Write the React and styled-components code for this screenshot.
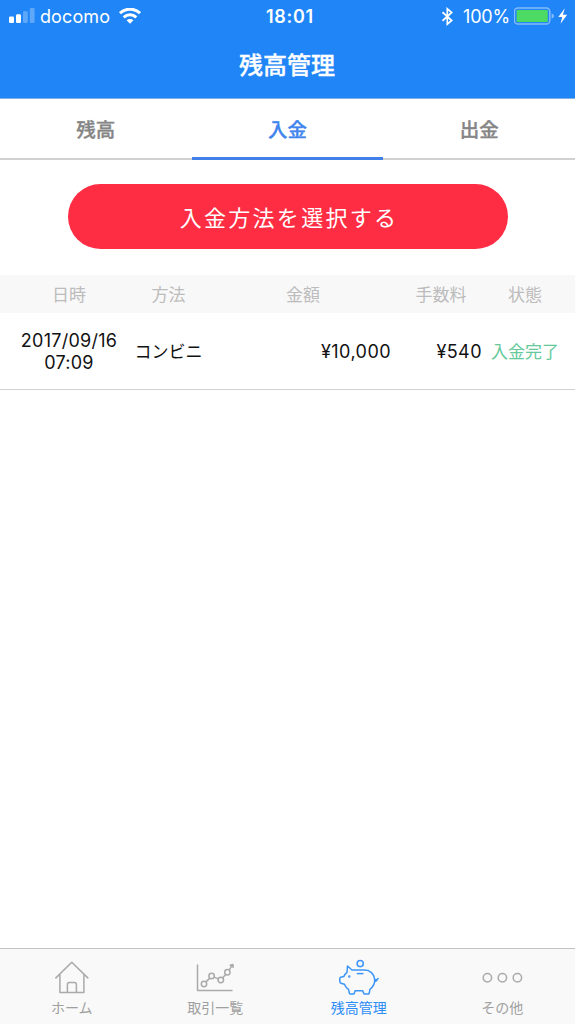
import styled, { createGlobalStyle } from 'styled-components';

const GlobalStyle = createGlobalStyle`
  * {
    box-sizing: border-box;
  }

  body {
    margin: 0;
    background-color: #fff;
    font-family: Inter, 'Noto Sans CJK JP', sans-serif;
  }

  button {
    padding: 0;
    border: 0;
    background: none;
    font-family: inherit;
  }
`;

const Screen = styled.div`
  display: flex;
  flex-direction: column;
  width: 575px;
  height: 1024px;
  overflow: hidden;
`;

const Header = styled.header`
  height: 99px;
  background-color: #2086f7;
  border-bottom: 1px solid #86aee0;
  color: #fff;
`;

const StatusBar = styled.div`
  display: grid;
  grid-template-columns: 1fr auto 1fr;
  align-items: center;
  height: 32px;
  padding: 0 6px 1px 9px;
  font-size: 18px;
  line-height: 31px;

  strong {
    padding: 1px 0 0 2px;
    font-size: 18px;
    font-weight: 600;
    letter-spacing: .7px;
  }
`;

const Carrier = styled.div`
  display: flex;
  align-items: center;

  span {
    margin: 0 9px 0 5px;
    padding-top: 1px;
    letter-spacing: .1px;
  }
`;

const Power = styled.div`
  display: flex;
  justify-content: flex-end;
  align-items: center;

  span {
    margin: 0 4px 0 9px;
    padding-top: 1px;
    letter-spacing: -.2px;
  }
`;

const Title = styled.h1`
  margin: 0;
  padding-right: 1px;
  font-size: 24px;
  font-weight: 500;
  line-height: 68px;
  text-align: center;
  -webkit-text-stroke: .35px currentColor;
`;

const Tabs = styled.nav`
  display: grid;
  grid-template-columns: repeat(3, 1fr);
  height: 61px;
  box-shadow: inset 0 -2px #d0d0d0;
`;

const Tab = styled.button`
  padding-top: 1px;
  border-bottom: 3px solid ${({ $active }) => ($active ? '#4080e8' : 'transparent')};
  color: ${({ $active }) => ($active ? '#4284ed' : '#858585')};
  font-size: 19.5px;
  font-weight: 500;
  -webkit-text-stroke: .35px currentColor;
`;

const DepositButton = styled.button`
  width: 440px;
  height: 65px;
  margin: 24px auto 26px 68px;
  padding: 0 0 2px 2px;
  border-radius: 33px;
  background-color: #ff2d43;
  color: #fff;
  font-size: 22px;
  letter-spacing: 2.3px;
`;

const Row = styled.div`
  display: grid;
  grid-template-columns: 106px 93px 176px 100px 68px;
  align-items: center;
  padding: 0 16px;
  text-align: center;
`;

const TableHead = styled(Row)`
  height: 38px;
  padding-bottom: 1px;
  background-color: #f8f8f8;
  color: #bcbcbc;
  font-size: 17px;
`;

const TableRow = styled(Row)`
  height: 77px;
  padding-top: 2px;
  border-bottom: 1px solid #d2d2d2;
  color: #111;
  font-size: 18px;
  line-height: 22px;
`;

const DateTime = styled.div`
  letter-spacing: .25px;
`;

const Method = styled.div`
  font-size: 17px;
`;

const Price = styled.div`
  padding-right: ${({ $gap }) => $gap || 0}px;
  letter-spacing: .45px;
  text-align: right;
`;

const State = styled.div`
  color: #65c99b;
  font-size: 17px;
  white-space: nowrap;
`;

const TabBar = styled.nav`
  display: grid;
  grid-template-columns: repeat(4, 1fr);
  height: 76px;
  margin-top: auto;
  padding-right: 1px;
  border-top: 1px solid #c2c2c2;
  background-color: #f9f9f9;
`;

const TabBarItem = styled.button`
  display: flex;
  flex-direction: column;
  align-items: center;
  padding-top: 8px;
  color: ${({ $active }) => ($active ? '#2b8cf6' : '#a0a0a0')};
  font-size: 14px;
  line-height: 20px;

  svg {
    margin-bottom: 1px;
    fill: none;
    stroke: ${({ $active }) => ($active ? '#3b95f8' : '#aaa')};
    stroke-width: 1.5;
    stroke-linejoin: round;
  }
`;

function SignalIcon() {
  return (
    <svg width="26" height="16" viewBox="0 0 26 16" fill="#fff">
      <rect x="0" y="8.5" width="5" height="6.5" rx="1.3" />
      <rect x="7" y="6.3" width="5" height="8.7" rx="1.3" />
      <rect x="14" y="3.3" width="4.8" height="11.7" rx="1.3" opacity=".28" />
      <rect x="20.8" y="0" width="4.8" height="15" rx="1.3" opacity=".28" />
    </svg>
  );
}

function WifiIcon() {
  return (
    <svg width="22" height="16" viewBox="0 0 22 16" fill="none" stroke="#fff" strokeWidth="3">
      <path d="M1 5.2a14.4 14.4 0 0 1 20 0" />
      <path d="M4.7 9.4a9.1 9.1 0 0 1 12.6 0" />
      <path d="M7.6 12.3a4.9 4.9 0 0 1 6.8 0L11 15.7z" fill="#fff" stroke="none" />
    </svg>
  );
}

function BluetoothIcon() {
  return (
    <svg width="12" height="19" viewBox="0 0 12 19" fill="none" stroke="#fff" strokeWidth="1.7">
      <path d="M.5 5.2l9.2 8.3-4.4 3.7V1.8l4.4 3.7L.5 13.8" />
    </svg>
  );
}

function BatteryIcon() {
  return (
    <svg width="55" height="20" viewBox="0 0 55 20">
      <rect x=".4" y="1.9" width="35.4" height="16.2" rx="3.6" fill="none" stroke="#83bbfa" strokeWidth="1.5" />
      <rect x="2.6" y="4" width="31.2" height="12" rx="1.2" fill="#4cd964" />
      <path d="M37.6 7.2q2.4 1 2.4 2.8t-2.4 2.8z" fill="#83bbfa" />
      <path d="M50.8 2.2L44.3 11h3.9l-1.6 6.8 6.5-9h-4.2z" fill="#fff" />
    </svg>
  );
}

function HomeIcon() {
  return (
    <svg width="44" height="40" viewBox="0 0 44 40">
      <path d="M5.4 21.4L21.8 5.2l16.5 16.2" />
      <path d="M9.9 17.4v18.2h24V17.4" />
      <path d="M17.4 35.6v-8q0-2 2-2h5q2 0 2 2v8" />
    </svg>
  );
}

function ChartIcon() {
  return (
    <svg width="44" height="40" viewBox="-1 0 44 40">
      <path d="M3.5 7.5v26h35" />
      <circle cx="10" cy="27" r="2.7" />
      <circle cx="17.6" cy="19" r="2.7" />
      <circle cx="26.8" cy="23" r="2.7" />
      <circle cx="33.4" cy="15.3" r="2.7" />
      <path d="M12 24.9l3.8-3.8M20.1 20.1l4.2 1.8M28.6 20.9l3-3.5M35 13.1l2.8-4.2M36.2 8.2l2.7-.8.2 2.8z" />
    </svg>
  );
}

function PiggyBankIcon() {
  return (
    <svg width="44" height="40" viewBox="0 0 44 40">
      <circle cx="23.2" cy="6.6" r="3.1" />
      <path d="M10.5 9l4.5 4h12.8c5.2 0 9.3 3.8 9.9 9.3.3 4.4-1.5 7.6-4.8 10l-.6 3.7q-.2 1-1 1h-3.5q-.8 0-1.1-.8l-1-2.5h-7.6l-.8 2.5q-.2.8-1 .8h-2.9q-.9 0-1-.9l-.9-3.8c-2-1.3-3.2-2.8-4.1-5l-3.4-1q-.7-.2-.9-.9-.5-2-.3-3.9.1-1 1-1.2l2.9-.7c.8-1.7 1.8-3.1 3.3-4.3z" />
      <path d="M19.8 16.6h6.6" />
      <path d="M37.8 22.6q2.4.8 3.6-1.6M37.8 24.4q2.4-.3 2.3-2.4" />
      <circle cx="12.3" cy="19.6" r=".5" />
    </svg>
  );
}

function MoreIcon() {
  return (
    <svg width="44" height="40" viewBox="-.6 0 44 40">
      <circle cx="6.8" cy="20.8" r="4.2" />
      <circle cx="21.8" cy="20.8" r="4.2" />
      <circle cx="36.8" cy="20.8" r="4.2" />
    </svg>
  );
}

const tabs = ['残高', '入金', '出金'];
const columns = ['日時', '方法', '金額', '手数料', '状態'];

const menus = [
  { label: 'ホーム', Icon: HomeIcon },
  { label: '取引一覧', Icon: ChartIcon },
  { label: '残高管理', Icon: PiggyBankIcon },
  { label: 'その他', Icon: MoreIcon },
];

export default function App() {
  return (
    <Screen>
      <GlobalStyle />
      <Header>
        <StatusBar>
          <Carrier>
            <SignalIcon />
            <span>docomo</span>
            <WifiIcon />
          </Carrier>
          <strong>18:01</strong>
          <Power>
            <BluetoothIcon />
            <span>100%</span>
            <BatteryIcon />
          </Power>
        </StatusBar>
        <Title>残高管理</Title>
      </Header>
      <Tabs>
        {tabs.map((tab) => (
          <Tab key={tab} type="button" $active={tab === '入金'}>
            {tab}
          </Tab>
        ))}
      </Tabs>
      <DepositButton type="button">入金方法を選択する</DepositButton>
      <TableHead>
        {columns.map((column) => (
          <div key={column}>{column}</div>
        ))}
      </TableHead>
      <TableRow>
        <DateTime>
          2017/09/16
          <br />
          07:09
        </DateTime>
        <Method>コンビニ</Method>
        <Price>¥10,000</Price>
        <Price $gap={9}>¥540</Price>
        <State>入金完了</State>
      </TableRow>
      <TabBar>
        {menus.map(({ label, Icon }) => (
          <TabBarItem key={label} type="button" $active={label === '残高管理'}>
            <Icon />
            {label}
          </TabBarItem>
        ))}
      </TabBar>
    </Screen>
  );
}
